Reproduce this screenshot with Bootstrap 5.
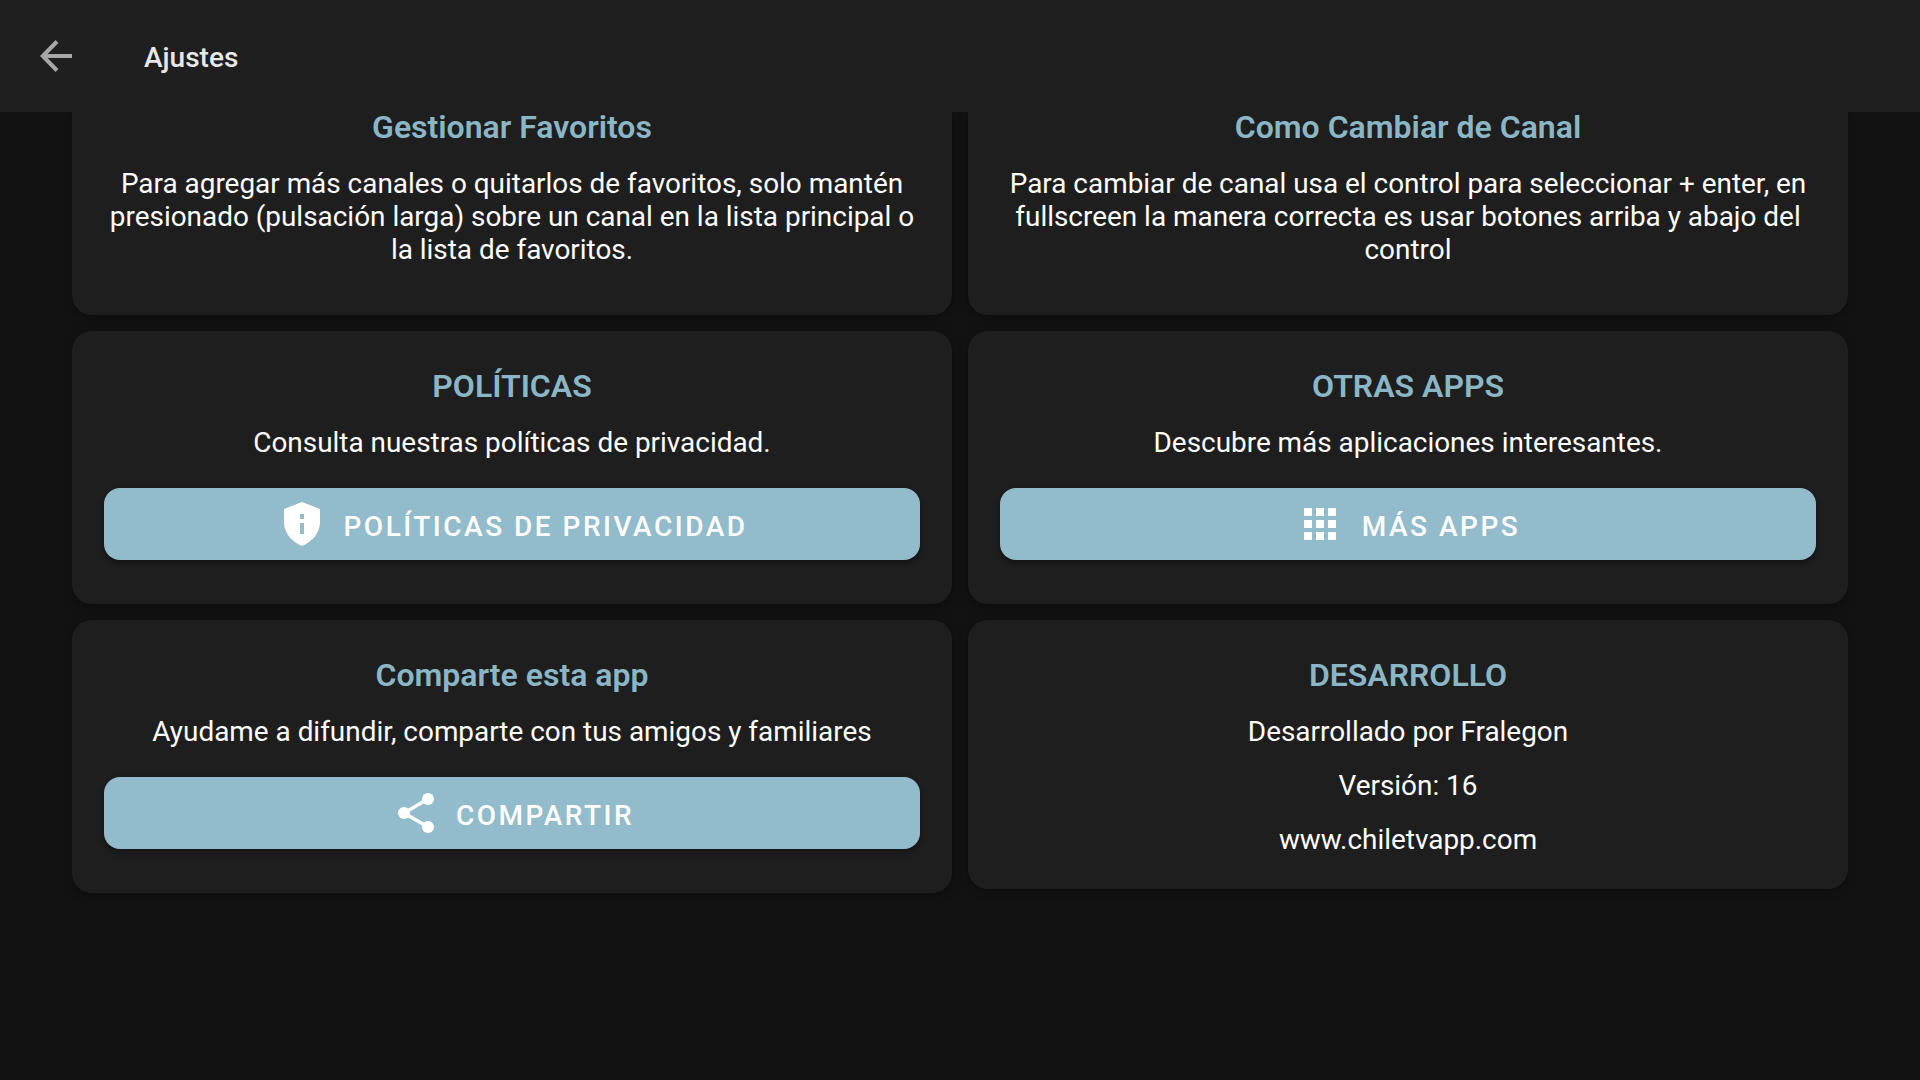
<!DOCTYPE html>
<html lang="es">
<head>
<meta charset="utf-8">
<title>Ajustes</title>
<link href="https://cdn.jsdelivr.net/npm/bootstrap@5.3.0/dist/css/bootstrap.min.css" rel="stylesheet">
<style>
html,body{height:100%;}
body{background:#121212;font-family:Roboto,"Liberation Sans",sans-serif;color:#fff;overflow:hidden;}
.top-bar{height:112px;background:#1f1f1f;padding-left:40px;position:relative;z-index:2;}
.back-ico{width:32px;height:32px;display:block;flex:none;}
.top-title{margin-left:72px;margin-top:4px;font-size:28px;font-weight:500;color:#e8e8e8;line-height:1;}
.cards-grid{display:grid;grid-template-columns:1fr 1fr;gap:16px;padding:0 72px;align-items:start;}
.pane{background:#1e1e1e;border-radius:20px;padding:0 32px;text-align:center;box-shadow:0 2px 10px rgba(0,0,0,.35);}
.pane-clipped{border-radius:0 0 20px 20px;height:203px;}
.pane-std{height:273px;padding-top:32px;}
.pane-dev{height:269px;padding-top:32px;}
.pane-title{font-size:32px;font-weight:600;line-height:46px;color:#8ab6c6;margin:0 0 17px;}
.pane-clipped .pane-title{margin:-8px 0 17px;}
.pane-dev .pane-title{margin-bottom:7px;}
.pane-text{font-size:27.92px;line-height:33px;margin:0;color:#fff;}
.pane-dev .pane-text{line-height:54px;}
.action-btn{height:72px;border-radius:16px;background:#92bbcb;border:0;color:#fff;font-size:28px;font-weight:500;letter-spacing:2.5px;margin-top:29px;width:100%;box-shadow:0 3px 6px rgba(0,0,0,.35);padding:0 0 0 8px;}
.action-btn:hover,.action-btn:active{background:#92bbcb!important;color:#fff!important;}
.action-label{padding-top:4px;line-height:33px;}
.gap-shield{gap:23px;}
.gap-grid{gap:26px;}
.gap-share{gap:22px;}
.btn-ico{display:block;flex:none;}
</style>
</head>
<body>
<header class="top-bar d-flex align-items-center">
  <svg class="back-ico" viewBox="0 0 32 32" fill="none" stroke="#a8a8a8" stroke-width="4" aria-hidden="true"><path d="M32 16H3"/><path d="M17 1.500 2.800 16 17 30.500"/></svg>
  <div class="top-title">Ajustes</div>
</header>
<main class="cards-grid">
  <section class="pane pane-clipped">
    <h2 class="pane-title">Gestionar Favoritos</h2>
    <p class="pane-text">Para agregar más canales o quitarlos de favoritos, solo mantén presionado (pulsación larga) sobre un canal en la lista principal o la lista de favoritos.</p>
  </section>
  <section class="pane pane-clipped">
    <h2 class="pane-title">Como Cambiar de Canal</h2>
    <p class="pane-text">Para cambiar de canal usa el control para seleccionar + enter, en fullscreen la manera correcta es usar botones arriba y abajo del control</p>
  </section>
  <section class="pane pane-std">
    <h2 class="pane-title">POLÍTICAS</h2>
    <p class="pane-text">Consulta nuestras políticas de privacidad.</p>
    <button class="btn action-btn gap-shield d-flex align-items-center justify-content-center" type="button">
      <svg class="btn-ico" width="36" height="44" viewBox="0 0 36 44" aria-hidden="true"><path fill="#fff" fill-rule="evenodd" d="M18 0 36 7V20C36 31 28 40 18 44 8 40 0 31 0 20V7ZM16 12V17H20V12ZM16 21V32H20V21Z"/></svg>
      <span class="action-label">POLÍTICAS DE PRIVACIDAD</span>
    </button>
  </section>
  <section class="pane pane-std">
    <h2 class="pane-title">OTRAS APPS</h2>
    <p class="pane-text">Descubre más aplicaciones interesantes.</p>
    <button class="btn action-btn gap-grid d-flex align-items-center justify-content-center" type="button">
      <svg class="btn-ico" width="32" height="32" viewBox="0 0 32 32" fill="#fff" aria-hidden="true"><path d="M0 0h8v8H0zM12 0h8v8h-8zM24 0h8v8h-8zM0 12h8v8H0zM12 12h8v8h-8zM24 12h8v8h-8zM0 24h8v8H0zM12 24h8v8h-8zM24 24h8v8h-8z"/></svg>
      <span class="action-label">MÁS APPS</span>
    </button>
  </section>
  <section class="pane pane-std">
    <h2 class="pane-title">Comparte esta app</h2>
    <p class="pane-text">Ayudame a difundir, comparte con tus amigos y familiares</p>
    <button class="btn action-btn gap-share d-flex align-items-center justify-content-center" type="button">
      <svg class="btn-ico" width="36" height="40" viewBox="0 0 36 40" aria-hidden="true"><path d="M6 20 30 6M6 20 30 34" stroke="#fff" stroke-width="3.500" fill="none"/><circle cx="6" cy="20" r="6" fill="#fff"/><circle cx="30" cy="6" r="6" fill="#fff"/><circle cx="30" cy="34" r="6" fill="#fff"/></svg>
      <span class="action-label">COMPARTIR</span>
    </button>
  </section>
  <section class="pane pane-dev">
    <h2 class="pane-title">DESARROLLO</h2>
    <p class="pane-text">Desarrollado por Fralegon</p>
    <p class="pane-text">Versión: 16</p>
    <p class="pane-text">www.chiletvapp.com</p>
  </section>
</main>
<script src="https://cdn.jsdelivr.net/npm/bootstrap@5.3.0/dist/js/bootstrap.bundle.min.js"></script>
</body>
</html>
